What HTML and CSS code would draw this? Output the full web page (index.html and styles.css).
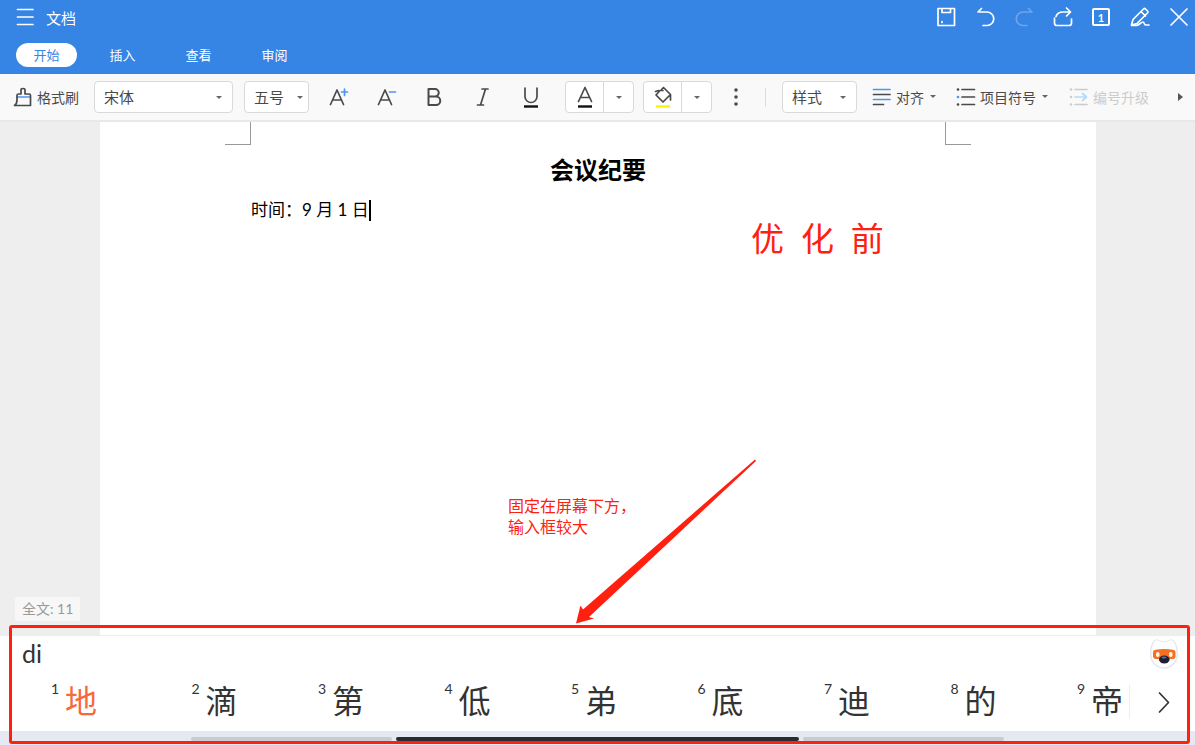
FILE: index.html
```html
<!DOCTYPE html>
<html lang="zh-CN">
<head>
    <meta charset="UTF-8">
    <meta name="viewport" content="width=device-width, initial-scale=1.0">
    <title>文档</title>
    <link rel="stylesheet" href="styles.css">
</head>
<body>
    <header class="header">
        <div class="title-bar">
            <button class="icon-btn" type="button" aria-label="菜单">
                <svg width="24" height="24" viewBox="0 0 24 24"><path d="M4.500 4.500h15.500M4.500 12h15.500M4.500 19.500h15.500"/></svg>
            </button>
            <h1 class="title">文档</h1>
            <div class="actions">
                <button class="icon-btn" type="button" aria-label="保存">
                    <svg width="24" height="24" viewBox="0 0 24 24"><path d="M5 3.500h16.500v17H5zM9 3.500v4h8.500v-4M9 16.500v1"/></svg>
                </button>
                <button class="icon-btn" type="button" aria-label="撤销">
                    <svg width="24" height="24" viewBox="0 0 24 24"><path d="M9.500 3.500l-3.500 3.500h9a6.500 6.500 0 0 1 0 13.500H11"/></svg>
                </button>
                <button class="icon-btn" type="button" aria-label="恢复" disabled>
                    <svg width="24" height="24" viewBox="0 0 24 24"><path d="M17.500 3.500L21 7h-9a6.500 6.500 0 0 0 0 13.500h4"/></svg>
                </button>
                <button class="icon-btn" type="button" aria-label="分享">
                    <svg width="24" height="24" viewBox="0 0 24 24"><path d="M4.500 13v5A2.500 2.500 0 0 0 7 20.500h12a2.500 2.500 0 0 0 2.500-2.500v-4M6 11.500C7 8.500 9.500 7 13 7h7.500M16.500 3l4 4-4 4"/></svg>
                </button>
                <button class="icon-btn page-btn" type="button" aria-label="第 1 页">1</button>
                <button class="icon-btn" type="button" aria-label="编辑">
                    <svg width="24" height="24" viewBox="0 0 24 24"><path d="M3.500 20L5 14.500 15.500 4q1-1 2 0l2 2q1 1 0 2L9 18.500 3.500 20zM13 6.500l4.500 4.500M3.500 20.500h5c3 0 4.500-3.500 6.500-3.500 1.500 0 1 3 2.500 3h3.500"/></svg>
                </button>
                <button class="icon-btn" type="button" aria-label="关闭">
                    <svg width="24" height="24" viewBox="0 0 24 24"><path d="M4 4l16 16M20 4L4 20"/></svg>
                </button>
            </div>
        </div>
        <nav class="tabs">
            <a class="tab active" href="#start">开始</a>
            <a class="tab" href="#insert">插入</a>
            <a class="tab" href="#view">查看</a>
            <a class="tab" href="#review">审阅</a>
        </nav>
    </header>

    <div class="toolbar">
        <button class="tool painter" type="button">
            <svg width="20" height="20" viewBox="0 0 20 20"><path class="blue" d="M4 10h13"/><path d="M4 8.500q0-1.500 1.500-1.500H8V3q0-1.500 2-1.500T12 3v4h4q1.500 0 1.500 1.500V18.500H1.500Q4 17 4 13z"/></svg>
            格式刷
        </button>
        <label class="picker picker-font">
            <select aria-label="字体"><option>宋体</option></select>
        </label>
        <label class="picker picker-size">
            <select aria-label="字号"><option>五号</option></select>
        </label>
        <div class="formats">
            <button class="format" type="button" aria-label="增大字号">
                <svg width="24" height="24" viewBox="0 0 24 24"><path d="M4.500 19.500L11 5l6.500 14.500M6.500 15h9"/><path class="blue" d="M18.500 4v6.500M15.500 7h6"/></svg>
            </button>
            <button class="format" type="button" aria-label="减小字号">
                <svg width="24" height="24" viewBox="0 0 24 24"><path d="M4.500 19.500L11 5l6.500 14.500M6.500 15h9"/><path class="blue" d="M15.500 7h6"/></svg>
            </button>
            <button class="format" type="button" aria-label="加粗">
                <svg width="24" height="24" viewBox="0 0 24 24"><path class="thick" d="M6.500 4h6.500a3.500 3.500 0 0 1 0 7.500H6.500zM6.500 11.500h7.500a4.200 4.200 0 0 1 0 8.500H6.500z"/></svg>
            </button>
            <button class="format" type="button" aria-label="倾斜">
                <svg width="24" height="24" viewBox="0 0 24 24"><path d="M12 4h6M7.500 20h6M15.500 4l-5 16"/></svg>
            </button>
            <button class="format" type="button" aria-label="下划线">
                <svg width="24" height="24" viewBox="0 0 24 24"><path d="M7 3v8.500a6 6 0 0 0 12 0V3"/><path class="bar" d="M6 21.500h14"/></svg>
            </button>
        </div>
        <div class="split">
            <button type="button" aria-label="字体颜色">
                <svg width="24" height="24" viewBox="0 0 24 24"><path d="M5.500 16.500L12 2.500l6.500 14M7.500 12.500h9"/><path class="bar" d="M5 21.500h14"/></svg>
            </button>
            <button class="more" type="button" aria-label="更多字体颜色"></button>
        </div>
        <div class="split">
            <button type="button" aria-label="突出显示">
                <svg width="24" height="24" viewBox="0 0 24 24"><path d="M10.500 4.500l2-2 7 7-7.500 7.500-7-7 4-4.500h3M4.500 6.500l3-1M19.500 9.500v5.500"/><path class="bar yellow" d="M5 21.500h14"/></svg>
            </button>
            <button class="more" type="button" aria-label="更多突出显示颜色"></button>
        </div>
        <button class="format" type="button" aria-label="更多">
            <svg width="24" height="24" viewBox="0 0 24 24"><g class="dots"><circle cx="12" cy="5" r="1.800"/><circle cx="12" cy="12" r="1.800"/><circle cx="12" cy="19" r="1.800"/></g></svg>
        </button>
        <span class="separator"></span>
        <label class="picker picker-style">
            <select aria-label="样式"><option>样式</option></select>
        </label>
        <button class="tool align" type="button">
            <svg width="20" height="20" viewBox="0 0 20 20"><path class="blue" d="M1.500 2.500h16.500M1.500 12.500h16.500"/><path d="M1.500 7.500h16.500M1.500 17.500h10"/></svg>
            对齐
            <span class="caret"></span>
        </button>
        <button class="tool" type="button">
            <svg width="20" height="20" viewBox="0 0 20 20"><path d="M6 2.500h12.500M6 10h12.500M6 17.500h12.500"/><g class="dots"><circle cx="2" cy="2.500" r="1.300"/><circle cx="2" cy="17.500" r="1.300"/><circle class="blue-dot" cx="2" cy="10" r="1.300"/></g></svg>
            项目符号
            <span class="caret"></span>
        </button>
        <button class="tool upgrade" type="button" disabled>
            <svg width="20" height="20" viewBox="0 0 20 20"><path d="M6 2.500h12M6 17.500h12"/><path class="blue" d="M6 10h11.500M13.500 6.500l4 3.500-4 3.500"/><g class="dots"><circle cx="2" cy="2.500" r="1.300"/><circle cx="2" cy="10" r="1.300"/><circle cx="2" cy="17.500" r="1.300"/></g></svg>
            编号升级
        </button>
        <button class="scroll" type="button" aria-label="向右滚动"></button>
    </div>

    <main class="workspace">
        <article class="page">
            <div class="corners">
                <span class="corner left"></span>
                <span class="corner right"></span>
            </div>
            <h2 class="doc-title">会议纪要</h2>
            <p class="doc-text">时间：9 月 1 日<span class="cursor"></span></p>
        </article>
        <p class="count">全文: 11</p>
        <p class="note note-title">优&nbsp;&nbsp;化&nbsp;&nbsp;前</p>
        <p class="note note-text">固定在屏幕下方，<br>输入框较大</p>
        <svg class="arrow" width="182" height="166" viewBox="0 0 182 166"><path d="M1 165.500L5.500 147.500 8 151.500 180 1.500 181 3 14 159 19 160.500z"/></svg>
    </main>

    <section class="ime">
        <div class="ime-top">
            <input class="pinyin" type="text" value="di" aria-label="拼音">
            <svg class="mascot" width="34" height="34" viewBox="0 0 34 34">
                <path class="halo" d="M3 17C3 10 5 4 8.500 2.500c2.500-1 4 2 8.500 2s6-3 8.500-2C29 4 31 10 31 17.500A14 14.500 0 0 1 3 17z"/>
                <path class="head" d="M4.500 17C4.500 10 6 5 9 3.500c2-.8 4 2 8 2s6-2.800 8-2c3 1.500 4.500 6.500 4.500 14A12.500 13 0 0 1 4.500 17z"/>
                <path class="mask" d="M6 15q0-2 2.500-2.300 8.500-1.400 17.500 0 2.500.3 2.500 2.300v4.500q0 2.500-2.500 2.500H9q-3 0-3-3z"/>
                <rect class="eye" x="9" y="15" width="3.500" height="5" rx="1.700"/>
                <rect class="eye" x="22" y="15" width="3.500" height="5" rx="1.700"/>
                <ellipse class="nose" cx="17.300" cy="22.500" rx="5.300" ry="4"/>
                <ellipse class="shine" cx="17" cy="20.500" rx="2.500" ry="1"/>
            </svg>
        </div>
        <div class="ime-row">
            <ol class="candidates">
                <li class="selected"><sup>1</sup>地</li>
                <li><sup>2</sup>滴</li>
                <li><sup>3</sup>第</li>
                <li><sup>4</sup>低</li>
                <li><sup>5</sup>弟</li>
                <li><sup>6</sup>底</li>
                <li><sup>7</sup>迪</li>
                <li><sup>8</sup>的</li>
                <li><sup>9</sup>帝</li>
            </ol>
            <button class="next" type="button" aria-label="下一页">
                <svg width="24" height="24" viewBox="0 0 24 24"><path d="M8.500 3l9 9.500L8.500 22"/></svg>
            </button>
        </div>
        <div class="nav-bar">
            <span></span>
            <span class="home"></span>
            <span></span>
        </div>
        <div class="frame"></div>
    </section>
</body>
</html>
```

FILE: styles.css
```css
* {
    box-sizing: border-box;
}

body {
    display: flex;
    flex-direction: column;
    min-height: 100vh;
    margin: 0;
    overflow-x: hidden;
    font-family: Lato, "Noto Sans CJK SC", sans-serif;
    color: #4a4a4a;
}

h1, h2, p, ol {
    margin: 0;
    padding: 0;
    font-weight: normal;
}

button {
    display: flex;
    align-items: center;
    justify-content: center;
    flex: none;
    margin: 0;
    padding: 0;
    border: 0;
    background: none;
    color: inherit;
    font: inherit;
}

svg {
    flex: none;
    fill: none;
    stroke: currentColor;
    stroke-width: 1.7;
    stroke-linecap: round;
    stroke-linejoin: round;
}

/* Header */
.header {
    background-color: #3684e4;
    color: white;
}

.title-bar {
    display: flex;
    align-items: center;
    height: 34px;
    padding: 0 4px 0 13px;
}

.title {
    margin-left: 9px;
    font-size: 15px;
}

.actions {
    display: flex;
    gap: 15px;
    margin-left: auto;
}

.icon-btn {
    width: 24px;
    height: 24px;
}

.icon-btn:disabled {
    color: #6aa5ee;
}

.page-btn {
    width: 18px;
    height: 18px;
    margin: 3px;
    border: 2px solid white;
    border-radius: 2px;
    font-size: 11px;
    font-weight: bold;
}

.tabs {
    display: flex;
    gap: 15px;
    padding: 9px 16px 7px;
}

.tab {
    width: 61px;
    border-radius: 12px;
    color: white;
    font-size: 13px;
    line-height: 24px;
    text-align: center;
    text-decoration: none;
}

.tab.active {
    background-color: white;
    color: #3684e4;
}

/* Toolbar */
.toolbar {
    display: flex;
    align-items: center;
    height: 48px;
    padding: 0 4px 0 13px;
    border-bottom: 2px solid #e8e8e8;
    background-color: #f9f9f9;
    white-space: nowrap;
}

.tool {
    gap: 4px;
    padding-bottom: 1px;
    font-size: 14px;
}

.tool:disabled {
    color: #ccc;
}

.tool:disabled .blue {
    stroke: #b5dafa;
}

.painter {
    margin-right: 15px;
}

.blue {
    stroke: #4a97ee;
}

.dots {
    fill: currentColor;
    stroke: none;
}

.blue-dot {
    fill: #4a97ee;
}

.thick {
    stroke-width: 2;
}

.bar {
    stroke: #111;
    stroke-width: 2.4;
    stroke-linecap: butt;
}

.yellow {
    stroke: #fdf500;
}

.picker {
    display: grid;
    flex: none;
    align-items: center;
}

.picker select {
    grid-area: 1 / 1;
    width: 100%;
    height: 32px;
    padding: 0 9px 1px;
    border: 1px solid #d9d9d9;
    border-radius: 4px;
    appearance: none;
    background-color: white;
    color: #4a4a4a;
    font: inherit;
    font-size: 15px;
}

.picker::after,
.more::after,
.caret {
    border: 3px solid transparent;
    border-top-color: #666;
    border-bottom: 0;
    content: "";
}

.picker::after {
    grid-area: 1 / 1;
    justify-self: end;
    margin-right: 11px;
    pointer-events: none;
}

.caret {
    margin-left: 2px;
}

.picker-font {
    width: 139px;
    margin-right: 11px;
}

.picker-size {
    width: 65px;
}

.picker-size::after {
    margin-right: 6px;
}

.picker-style {
    width: 75px;
    margin-right: 15px;
}

.formats {
    display: flex;
    margin: 0 11px 0 5px;
}

.format {
    width: 48px;
    height: 32px;
}

.split {
    display: flex;
    flex: none;
    width: 69px;
    height: 32px;
    border: 1px solid #d9d9d9;
    border-radius: 4px;
    background-color: white;
}

.split + .split {
    margin-left: 9px;
}

.split button {
    width: 37px;
}

.split .more {
    flex: 1;
    border-left: 1px solid #d9d9d9;
}

.separator {
    width: 1px;
    height: 19px;
    margin: 0 16px 0 5px;
    background-color: #ddd;
}

.align,
.upgrade {
    margin-right: 20px;
}

.upgrade {
    margin-left: 21px;
}

.scroll {
    margin-left: auto;
    padding: 8px;
}

.scroll::after {
    border: 4px solid transparent;
    border-left: 5px solid #555;
    border-right: 0;
    content: "";
}

/* Document */
.workspace {
    display: flex;
    flex: 1;
    position: relative;
    padding: 0 99px 0 100px;
    background-color: #eee;
}

.page {
    flex: 1;
    background-color: white;
    color: black;
}

.corners {
    display: flex;
    justify-content: space-between;
    padding: 0 125px;
}

.corner {
    width: 26px;
    height: 23px;
    border-bottom: 1px solid #999;
}

.corner.left {
    border-right: 1px solid #999;
}

.corner.right {
    border-left: 1px solid #999;
}

.doc-title {
    padding-top: 9px;
    font-size: 24px;
    font-weight: bold;
    line-height: 32px;
    text-align: center;
}

.doc-text {
    display: flex;
    align-items: center;
    padding: 12px 151px;
    font-size: 17px;
    line-height: 24px;
}

.cursor {
    width: 2px;
    height: 21px;
    background-color: black;
}

.count {
    position: absolute;
    bottom: 14px;
    left: 15px;
    padding: 0 7px;
    border-radius: 2px;
    background-color: #f7f7f7;
    color: #999;
    font-size: 14px;
    line-height: 24px;
}

/* Red notes over the page */
.note {
    position: absolute;
    color: #ff2010;
}

.note-title {
    top: 92px;
    left: 751px;
    font-size: 33px;
    line-height: 48px;
}

.note-text {
    top: 373px;
    left: 508px;
    font-size: 16px;
    line-height: 21px;
}

.arrow {
    position: absolute;
    top: 336px;
    left: 575px;
    fill: #ff2010;
    stroke: none;
}

.frame {
    position: absolute;
    inset: -11px 5px 1px 9px;
    border: 3px solid #ff2010;
    border-radius: 3px;
    pointer-events: none;
}

/* Input method panel */
.ime {
    position: relative;
    border-top: 1px solid #eee;
    background-color: white;
    color: #333;
}

.ime-top {
    display: flex;
    align-items: center;
    justify-content: space-between;
    height: 36px;
    padding: 0 14px 0 22px;
}

.pinyin {
    width: 200px;
    padding: 0 0 2px;
    border: 0;
    outline: 0;
    background: none;
    color: inherit;
    font: inherit;
    font-size: 25px;
}

.mascot {
    stroke: none;
}

.halo {
    fill: #e1e6f2;
}

.head {
    fill: white;
}

.mask {
    fill: #f8701d;
}

.eye {
    fill: #fff4e8;
}

.nose {
    fill: #1d1f36;
}

.shine {
    fill: #6c6e88;
}

.ime-row {
    display: flex;
    align-items: center;
    height: 59px;
}

.candidates {
    display: flex;
    flex: 1;
    justify-content: space-between;
    padding: 0 6px 2px 51px;
    border-right: 1px solid #eee;
    font-size: 32px;
    line-height: 32px;
    list-style: none;
}

.candidates li {
    display: flex;
    gap: 6px;
}

.candidates sup {
    width: 8px;
    font-size: 14px;
    line-height: 8px;
}

.candidates .selected {
    margin-right: 14px;
    color: #f8683a;
}

.selected sup {
    color: #333;
}

.next {
    width: 65px;
    height: 32px;
}

.nav-bar {
    display: flex;
    gap: 4px;
    height: 14px;
    padding: 6px 16% 0;
    background-color: #e6e9f2;
}

.nav-bar span {
    flex: 1;
    height: 4px;
    border-radius: 2px;
    background-color: #c8cbd0;
}

.nav-bar .home {
    flex: 2;
    background-color: #282b30;
}
```
